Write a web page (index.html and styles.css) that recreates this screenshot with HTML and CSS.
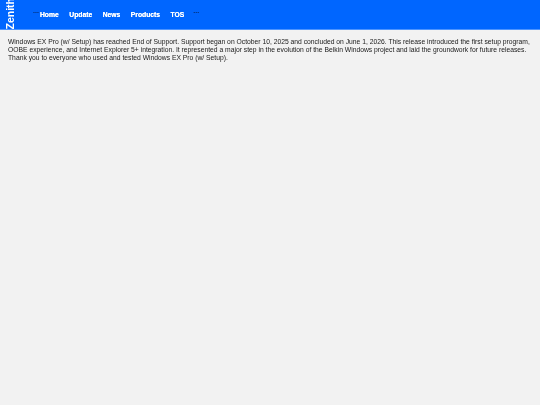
FILE: index.html
```html
<!DOCTYPE html>
<html lang="en">
<head>
<meta charset="utf-8">
<title>Zenith</title>
<link rel="stylesheet" href="styles.css">
</head>
<body>
<header class="topbar">
  <div class="brand"><span class="brand-text">Zenith</span></div>
  <span class="ellipsis">...</span>
  <nav class="nav">
    <a href="#">Home</a>
    <a href="#">Update</a>
    <a href="#">News</a>
    <a href="#">Products</a>
    <a href="#">TOS</a>
  </nav>
  <span class="ellipsis ellipsis-end">...</span>
</header>
<main class="content">
  <p>Windows EX Pro (w/ Setup) has reached End of Support. Support began on October 10, 2025 and concluded on June 1, 2026. This release introduced the first setup program, OOBE experience, and Internet Explorer 5+ integration. It represented a major step in the evolution of the Belkin Windows project and laid the groundwork for future releases. Thank you to everyone who used and tested Windows EX Pro (w/ Setup).</p>
</main>
</body>
</html>
```
FILE: styles.css
```css
html, body { margin: 0; padding: 0; height: 100%; }
body { background: #f2f2f2; font-family: "Liberation Sans", Arial, sans-serif; overflow: hidden; }
.topbar { display: flex; align-items: center; height: 29px; background: #0066ff; border-bottom: 1px solid #4d94ff; overflow: hidden; }
.brand { width: 17px; height: 29px; overflow: hidden; display: flex; align-items: flex-end; justify-content: center; flex: none; margin-left: 2px; }
.brand-text { writing-mode: vertical-rl; transform: rotate(180deg); color: #fff; font-weight: 700; font-size: 10.5px; line-height: 17px; white-space: nowrap; filter: blur(0.25px); }
.ellipsis { color: #032a6b; font-size: 7px; font-weight: 700; line-height: 1; margin-left: 14px; width: 7px; flex: none; margin-top: -8px; filter: blur(0.2px); }
.ellipsis-end { margin-left: 9px; }
.nav { display: flex; gap: 10.5px; filter: blur(0.2px); }
.nav a { color: #fff; font-size: 6.75px; font-weight: 700; text-decoration: none; text-shadow: 0 0 0.4px #fff; }
.content { padding: 8px; }
.content p { margin: 0; font-size: 6.75px; line-height: 7.9px; color: #1a1a1a; filter: blur(0.2px); }
```
